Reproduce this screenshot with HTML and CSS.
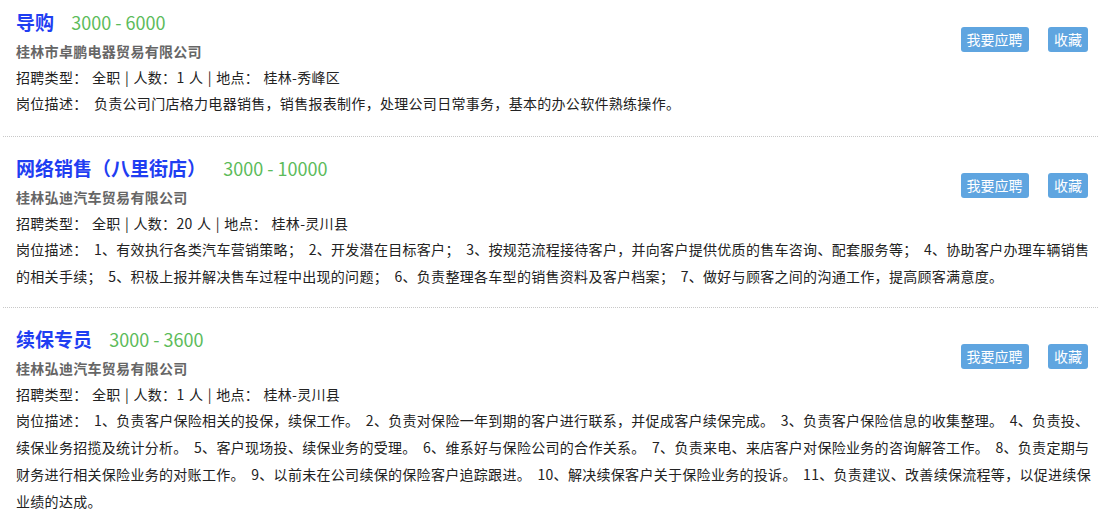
FILE: index.html
```html
<!DOCTYPE html>
<html lang="zh-CN">
<head>
  <meta charset="UTF-8" />
  <title>职位列表</title>
  <link rel="stylesheet" href="styles.css">
</head>
<body>
  <div class="job-list">

    <!-- 导购 -->
    <div class="job">
      <div class="job-actions">
        <a class="btn" href="#">我要应聘</a>
        <a class="btn" href="#">收藏</a>
      </div>
      <div class="job-title">
        <a class="job-name" href="#">导购</a>
        <span class="salary">3000 - 6000</span>
      </div>
      <div class="company">桂林市卓鹏电器贸易有限公司</div>
      <div class="info">招聘类型：&nbsp;全职 | 人数：1 人 | 地点：&nbsp;桂林-秀峰区</div>
      <div class="desc">岗位描述：&nbsp;负责公司门店格力电器销售，销售报表制作，处理公司日常事务，基本的办公软件熟练操作。</div>
    </div>

    <!-- 网络销售 -->
    <div class="job">
      <div class="job-actions">
        <a class="btn" href="#">我要应聘</a>
        <a class="btn" href="#">收藏</a>
      </div>
      <div class="job-title">
        <a class="job-name" href="#">网络销售（八里街店）</a>
        <span class="salary">3000 - 10000</span>
      </div>
      <div class="company">桂林弘迪汽车贸易有限公司</div>
      <div class="info">招聘类型：&nbsp;全职 | 人数：20 人 | 地点：&nbsp;桂林-灵川县</div>
      <div class="desc">岗位描述：&nbsp;1、有效执行各类汽车营销策略； 2、开发潜在目标客户； 3、按规范流程接待客户，并向客户提供优质的售车咨询、配套服务等； 4、协助客户办理车辆销售的相关手续； 5、积极上报并解决售车过程中出现的问题； 6、负责整理各车型的销售资料及客户档案； 7、做好与顾客之间的沟通工作，提高顾客满意度。</div>
    </div>

    <!-- 续保专员 -->
    <div class="job">
      <div class="job-actions">
        <a class="btn" href="#">我要应聘</a>
        <a class="btn" href="#">收藏</a>
      </div>
      <div class="job-title">
        <a class="job-name" href="#">续保专员</a>
        <span class="salary">3000 - 3600</span>
      </div>
      <div class="company">桂林弘迪汽车贸易有限公司</div>
      <div class="info">招聘类型：&nbsp;全职 | 人数：1 人 | 地点：&nbsp;桂林-灵川县</div>
      <div class="desc">岗位描述：&nbsp;1、负责客户保险相关的投保，续保工作。 2、负责对保险一年到期的客户进行联系，并促成客户续保完成。 3、负责客户保险信息的收集整理。 4、负责投、续保业务招揽及统计分析。 5、客户现场投、续保业务的受理。 6、维系好与保险公司的合作关系。 7、负责来电、来店客户对保险业务的咨询解答工作。 8、负责定期与财务进行相关保险业务的对账工作。 9、以前未在公司续保的保险客户追踪跟进。 10、解决续保客户关于保险业务的投诉。 11、负责建议、改善续保流程等，以促进续保业绩的达成。</div>
    </div>

  </div>
</body>
</html>
```

FILE: styles.css
```css
body {
  margin: 0;
  font-family: "Noto Sans CJK SC", sans-serif;
  font-size: 14px;
  letter-spacing: 0.3px;
  color: #222;
  background: #fff;
}
.job-list {
  padding: 0 2px 0 3px;
}
.job {
  padding: 15px 2px 17px 13px;
  border-bottom: 1px dotted #c8c8c8;
}
.job:first-child {
  padding-top: 6px;
  padding-bottom: 19px;
}
.job-title {
  height: 32px;
  line-height: 32px;
  letter-spacing: 0;
}
.job-name {
  font-size: 19px;
  font-weight: bold;
  color: #1f3ef2;
  text-decoration: none;
}
.salary {
  font-size: 18px;
  color: #5cbb5a;
  margin-left: 14px;
}
.company {
  line-height: 26px;
  font-weight: bold;
  color: #666;
}
.info {
  line-height: 26px;
  word-spacing: 1px;
}
.desc {
  line-height: 27px;
  word-spacing: 3px;
}
/* buttons on the right */
.job-actions {
  float: right;
  margin-top: 21px;
  margin-right: 8px;
}
.btn {
  display: inline-block;
  height: 25px;
  line-height: 25px;
  padding: 0 6px;
  margin-left: 16px;
  font-size: 14px;
  letter-spacing: 0;
  word-spacing: 0;
  color: #fff;
  background-color: #5fa5e0;
  border-radius: 3px;
  text-decoration: none;
}
```
